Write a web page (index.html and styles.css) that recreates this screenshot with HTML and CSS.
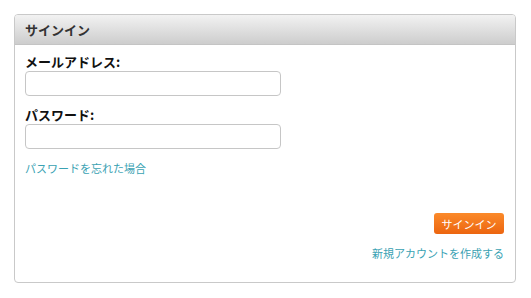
FILE: index.html
```html
<!DOCTYPE html>
<html lang="ja">
<head>
    <meta charset="UTF-8">
    <title>サインイン</title>
    <link rel="stylesheet" href="styles.css">
</head>
<body>
    <div class="panel">
        <div class="panel-header">サインイン</div>
        <form class="panel-body">
            <label class="field-label" for="email">メールアドレス:</label>
            <input class="field-input" id="email" type="text">

            <label class="field-label" for="password">パスワード:</label>
            <input class="field-input" id="password" type="password">

            <a class="link" href="#">パスワードを忘れた場合</a>

            <div class="actions">
                <button class="signin-btn" type="button">サインイン</button>
                <a class="link" href="#">新規アカウントを作成する</a>
            </div>
        </form>
    </div>
</body>
</html>
```

FILE: styles.css
```css
body {
    margin: 0;
    padding: 14px;
    background-color: #fff;
    font-family: "Noto Sans CJK JP", "Noto Sans", sans-serif;
    color: #222;
}

.panel {
    width: 500px;
    height: 267px;
    border: 1px solid #c9c9c9;
    border-radius: 4px;
    overflow: hidden;
}

.panel-header {
    height: 29px;
    line-height: 29px;
    padding-left: 10px;
    font-size: 13px;
    font-weight: bold;
    color: #333;
    background: linear-gradient(#f2f2f2, #cdcdcd);
    border-bottom: 1px solid #c4c4c4;
}

.panel-body {
    display: flex;
    flex-direction: column;
    align-items: flex-start;
    padding: 8px 11px 0 10px;
}

.field-label {
    font-size: 13px;
    font-weight: bold;
    line-height: 18px;
    color: #111;
}

.field-input {
    box-sizing: border-box;
    width: 256px;
    height: 25px;
    margin: 0 0 10px;
    border: 1px solid #c6c6c6;
    border-radius: 4px;
    background: #fff;
}

.link {
    font-size: 11px;
    line-height: 18px;
    color: #3aa2b3;
    text-decoration: none;
}

.actions {
    align-self: stretch;
    display: flex;
    flex-direction: column;
    align-items: flex-end;
    margin-top: 36px;
    gap: 10px;
}

.signin-btn {
    width: 70px;
    height: 21px;
    padding: 0;
    border: none;
    border-radius: 3px;
    background: linear-gradient(#fb8a2a, #ec6510);
    color: #fff;
    font-family: inherit;
    font-size: 11px;
    cursor: pointer;
}
```
